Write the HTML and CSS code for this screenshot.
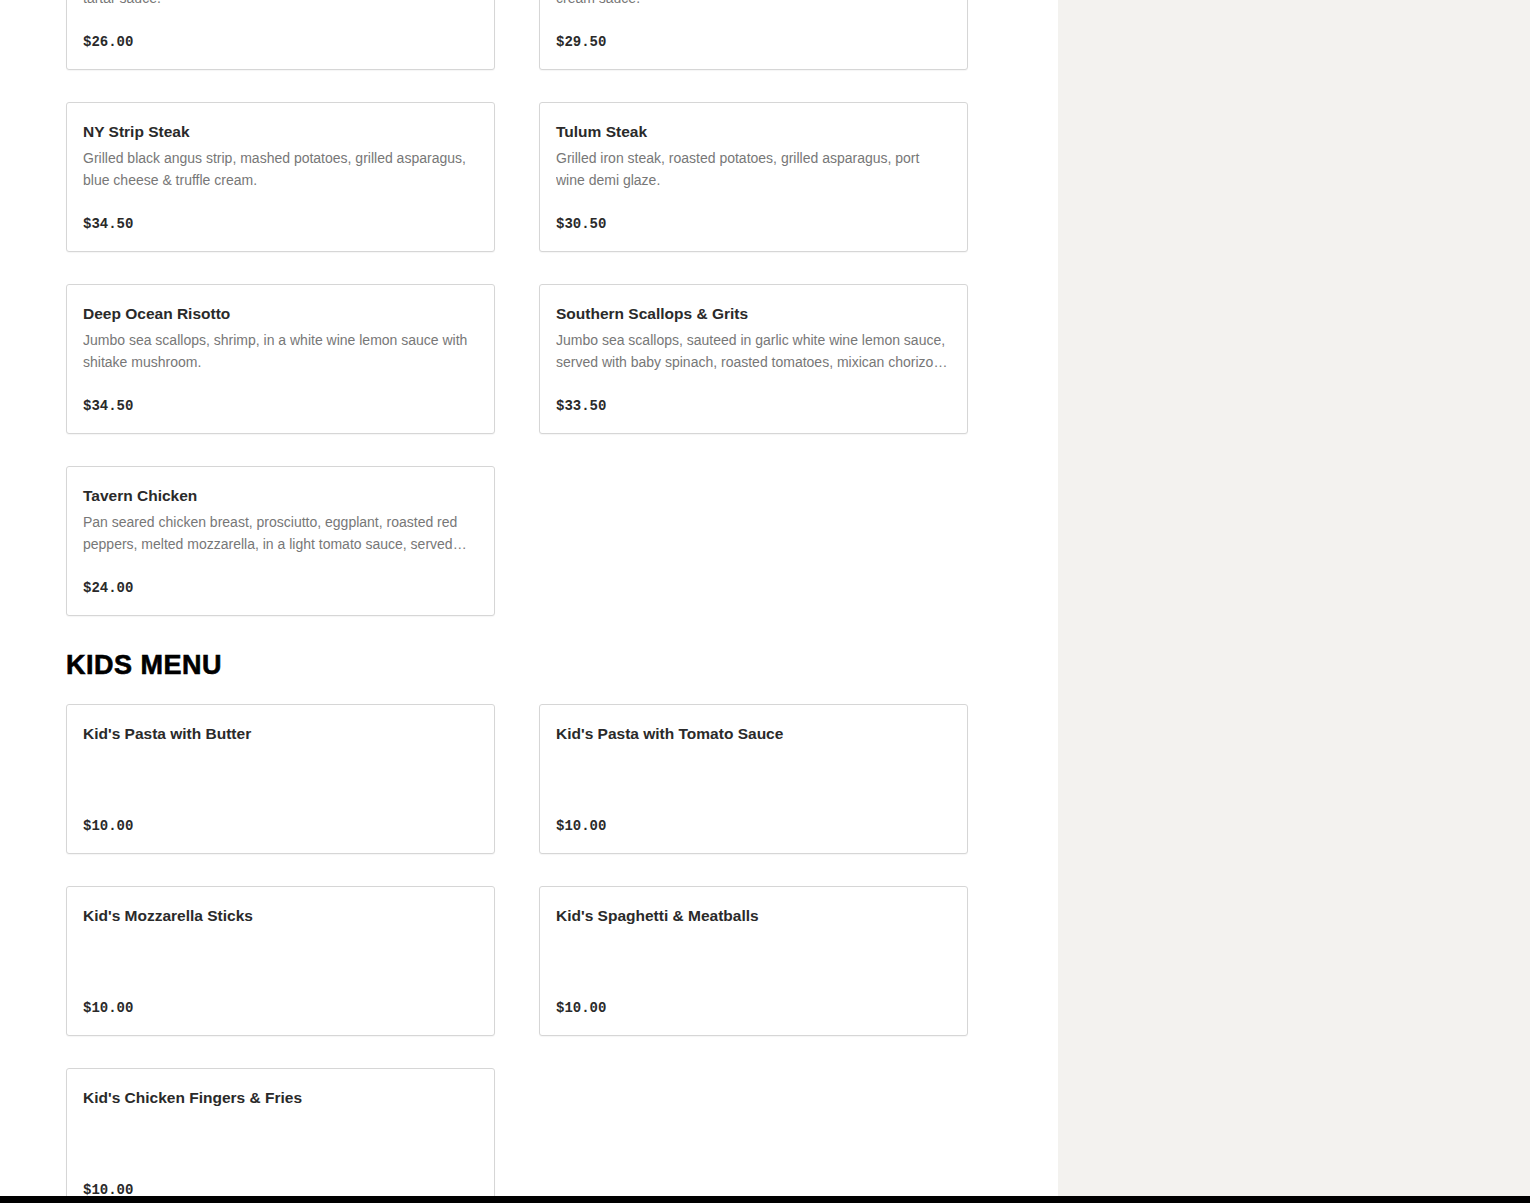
FILE: index.html
```html
<!DOCTYPE html>
<html lang="en">
<head>
<meta charset="utf-8">
<title>Menu</title>
<link rel="stylesheet" href="styles.css">
</head>
<body>
<div class="layout">
  <main class="main">
    <section class="section section-first">
      <div class="grid">
        <div class="card">
          <div class="card-title">Fish &amp; Chips</div>
          <div class="card-desc">Beer battered cod, french fries, coleslaw, lemon and house tartar sauce.</div>
          <div class="card-price">$26.00</div>
        </div>
        <div class="card">
          <div class="card-title">Salmon Florentine</div>
          <div class="card-desc">Pan seared salmon, baby spinach, mashed potatoes, lemon dill cream sauce.</div>
          <div class="card-price">$29.50</div>
        </div>
        <div class="card">
          <div class="card-title">NY Strip Steak</div>
          <div class="card-desc">Grilled black angus strip, mashed potatoes, grilled asparagus, blue cheese &amp; truffle cream.</div>
          <div class="card-price">$34.50</div>
        </div>
        <div class="card">
          <div class="card-title">Tulum Steak</div>
          <div class="card-desc">Grilled iron steak, roasted potatoes, grilled asparagus, port wine demi glaze.</div>
          <div class="card-price">$30.50</div>
        </div>
        <div class="card">
          <div class="card-title">Deep Ocean Risotto</div>
          <div class="card-desc">Jumbo sea scallops, shrimp, in a white wine lemon sauce with shitake mushroom.</div>
          <div class="card-price">$34.50</div>
        </div>
        <div class="card">
          <div class="card-title">Southern Scallops &amp; Grits</div>
          <div class="card-desc">Jumbo sea scallops, sauteed in garlic white wine lemon sauce, served with baby spinach, roasted tomatoes, mixican chorizo and cheddar grits.</div>
          <div class="card-price">$33.50</div>
        </div>
        <div class="card">
          <div class="card-title">Tavern Chicken</div>
          <div class="card-desc">Pan seared chicken breast, prosciutto, eggplant, roasted red peppers, melted mozzarella, in a light tomato sauce, served over linguine.</div>
          <div class="card-price">$24.00</div>
        </div>
      </div>
    </section>
    <section class="section">
      <h2 class="section-title">KIDS MENU</h2>
      <div class="grid">
        <div class="card">
          <div class="card-title">Kid's Pasta with Butter</div>
          <div class="card-desc"></div>
          <div class="card-price">$10.00</div>
        </div>
        <div class="card">
          <div class="card-title">Kid's Pasta with Tomato Sauce</div>
          <div class="card-desc"></div>
          <div class="card-price">$10.00</div>
        </div>
        <div class="card">
          <div class="card-title">Kid's Mozzarella Sticks</div>
          <div class="card-desc"></div>
          <div class="card-price">$10.00</div>
        </div>
        <div class="card">
          <div class="card-title">Kid's Spaghetti &amp; Meatballs</div>
          <div class="card-desc"></div>
          <div class="card-price">$10.00</div>
        </div>
        <div class="card">
          <div class="card-title">Kid's Chicken Fingers &amp; Fries</div>
          <div class="card-desc"></div>
          <div class="card-price">$10.00</div>
        </div>
      </div>
    </section>
  </main>
  <aside class="sidebar"></aside>
</div>
<div class="bottom-bar"></div>
</body>
</html>
```
FILE: styles.css
```css
* { box-sizing: border-box; }
html, body {
  margin: 0;
  padding: 0;
  height: 100%;
  overflow: hidden;
  background: #ffffff;
  font-family: "Liberation Sans", Arial, sans-serif;
}
.layout {
  display: flex;
  height: 1203px;
  overflow: hidden;
}
.main {
  width: 1058px;
  flex: 0 0 1058px;
  padding: 0 90px 0 66px;
  background: #ffffff;
}
.sidebar {
  flex: 1 1 auto;
  background: #f3f2ef;
}
.section-first {
  margin-top: -80px;
}
.grid {
  display: grid;
  grid-template-columns: 429px 429px;
  column-gap: 44px;
  row-gap: 32px;
}
.card {
  height: 150px;
  border: 1px solid #d6d6d6;
  border-radius: 3px;
  padding: 17px 16px 0 16px;
  background: #fff;
  box-shadow: 0 1px 1px rgba(0,0,0,0.04);
}
.card-title {
  font-size: 15.5px;
  line-height: 24px;
  font-weight: 700;
  color: #2a2a2a;
}
.card-desc {
  margin-top: 3px;
  height: 44px;
  font-size: 14px;
  line-height: 22px;
  color: #777777;
  display: -webkit-box;
  -webkit-line-clamp: 2;
  -webkit-box-orient: vertical;
  overflow: hidden;
}
.card-price {
  margin-top: 23px;
  font-family: "Liberation Mono", "DejaVu Sans Mono", monospace;
  font-size: 14px;
  line-height: 20px;
  font-weight: 700;
  color: #2a2a2a;
}
.section-title {
  margin: 34px 0 24px 0;
  font-size: 27px;
  line-height: 30px;
  font-weight: 900;
  color: #000;
  letter-spacing: 0.5px;
  -webkit-text-stroke: 0.6px #000;
}
.bottom-bar {
  position: fixed;
  left: 0;
  right: 0;
  bottom: 0;
  height: 7px;
  background: #000;
}
```
